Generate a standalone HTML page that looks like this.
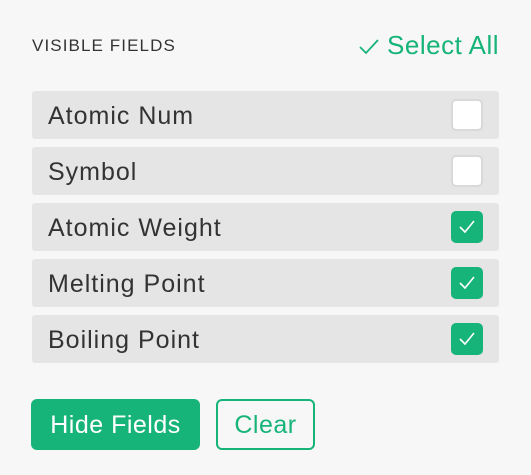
<!DOCTYPE html><html><head><style>
body{margin:0;width:531px;height:475px;background:#f7f7f7;font-family:"Liberation Sans",sans-serif;position:relative;overflow:hidden}
.h{position:absolute;left:32px;top:36px;font-size:17px;letter-spacing:1.1px;color:#333}
.sa{position:absolute;right:32px;top:30px;font-size:26px;letter-spacing:.5px;color:#17b47a}
.sa svg{vertical-align:-1px;margin-right:8px}
.r{position:absolute;left:32px;width:467px;height:48px;background:#e5e5e5;border-radius:3px}
.r span{position:absolute;left:16px;top:11px;font-size:25px;letter-spacing:1px;color:#333}
.c{position:absolute;left:419px;top:8px;width:28px;height:28px;border:2px solid #d9d9d9;background:#fff;border-radius:5px}
.c.on{background:#17b47a;border-color:#17b47a}
.c svg{position:absolute;left:6px;top:7px}
.b{position:absolute;top:399px;height:51px;border-radius:6px;font-size:25px;letter-spacing:.5px;box-sizing:border-box;text-align:center;line-height:53px}
</style></head><body>
<div class="h">VISIBLE FIELDS</div>
<div class="sa"><svg width="20" height="16" viewBox="0 0 20 16"><path d="M1 8l6 6L19 1" fill="none" stroke="#17b47a" stroke-width="1.8"/></svg>Select All</div>
<div class="r" style="top:91px"><span>Atomic Num</span><div class="c"></div></div>
<div class="r" style="top:147px"><span>Symbol</span><div class="c"></div></div>
<div class="r" style="top:203px"><span>Atomic Weight</span><div class="c on"><svg width="16" height="14" viewBox="0 0 16 14"><path d="M1 7l5 5L15 1" fill="none" stroke="#fff" stroke-width="1.6"/></svg></div></div>
<div class="r" style="top:259px"><span>Melting Point</span><div class="c on"><svg width="16" height="14" viewBox="0 0 16 14"><path d="M1 7l5 5L15 1" fill="none" stroke="#fff" stroke-width="1.6"/></svg></div></div>
<div class="r" style="top:315px"><span>Boiling Point</span><div class="c on"><svg width="16" height="14" viewBox="0 0 16 14"><path d="M1 7l5 5L15 1" fill="none" stroke="#fff" stroke-width="1.6"/></svg></div></div>
<div class="b" style="left:31px;width:169px;background:#17b47a;color:#fff">Hide Fields</div>
<div class="b" style="left:216px;width:99px;border:2px solid #17b47a;color:#17b47a;line-height:49px">Clear</div>
</body></html>
